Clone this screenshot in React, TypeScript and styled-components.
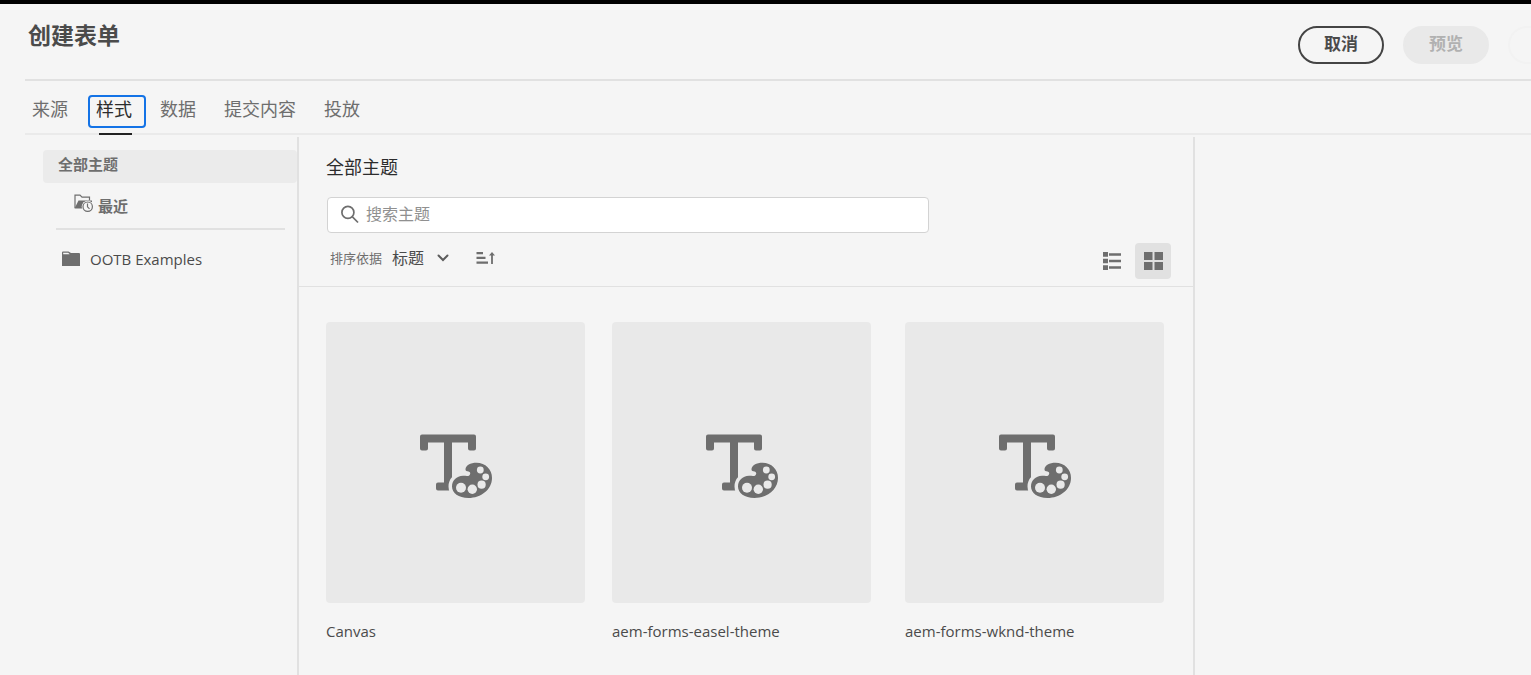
import React, { useState } from 'react';
import styled, { createGlobalStyle } from 'styled-components';

const GlobalStyle = createGlobalStyle`
  *, *::before, *::after { box-sizing: border-box; }
  body {
    margin: 0;
    background: #f5f5f5;
    color: #4b4b4b;
    font-family: 'Open Sans', 'Noto Sans CJK SC', sans-serif;
    font-size: 15px;
    line-height: 20px;
  }
  button, input, select { font-family: inherit; margin: 0; }
`;

const Page = styled.div`
  display: flex;
  flex-direction: column;
  min-height: 100vh;
  border-top: 4px solid #000;
  overflow: hidden;
`;

const Header = styled.header`
  display: flex;
  align-items: flex-start;
  justify-content: space-between;
  height: 77px;
  margin-left: 25px;
  padding: 15px 0 0 3px;
  border-bottom: 2px solid #e1e1e1;
`;

const Title = styled.h1`
  margin: 0;
  font-size: 23px;
  line-height: 32px;
  font-weight: 700;
  color: #4b4b4b;
`;

const Actions = styled.div`
  display: flex;
  gap: 19px;
  margin: 7px -63px 0 0;
`;

const PillButton = styled.button<{ $tone: 'outline' | 'muted' | 'faint' }>`
  width: 86px;
  height: 38px;
  padding: 0 0 2px;
  border-radius: 19px;
  border: 2px solid
    ${({ $tone }) => ($tone === 'outline' ? '#444' : $tone === 'muted' ? '#e9e9e9' : '#f2f2f2')};
  background: ${({ $tone }) => ($tone === 'muted' ? '#e9e9e9' : '#f5f5f5')};
  color: ${({ $tone }) => ($tone === 'outline' ? '#4b4b4b' : '#b1b1b1')};
  font-size: 17px;
  line-height: 24px;
  font-weight: 700;
`;

const Tabs = styled.nav`
  display: flex;
  align-items: flex-start;
  gap: 6px;
  height: 54px;
  margin-left: 25px;
  padding-top: 14px;
  border-bottom: 2px solid #eaeaea;
`;

const Tab = styled.button<{ $active: boolean }>`
  position: relative;
  height: 33px;
  padding: 0 12px 5px 6px;
  border: 2px solid ${({ $active }) => ($active ? '#1473e6' : 'transparent')};
  border-radius: 4px;
  background: transparent;
  color: ${({ $active }) => ($active ? '#2c2c2c' : '#6e6e6e')};
  font-size: 18px;
  line-height: 24px;

  &:first-child { margin-left: -1px; }

  &::after {
    content: '';
    display: ${({ $active }) => ($active ? 'block' : 'none')};
    position: absolute;
    left: 9px;
    bottom: -9px;
    width: 33px;
    height: 2px;
    background: #222;
  }
`;

const Body = styled.div`
  display: flex;
  flex: 1;
  padding-top: 2px;
`;

const Sidebar = styled.aside`
  flex: 0 0 299px;
  padding-top: 13px;
  border-right: 2px solid #e1e1e1;
`;

const AllThemes = styled.a`
  display: block;
  height: 33px;
  margin-left: 43px;
  padding: 4px 15px;
  border-radius: 4px;
  background: #ebebeb;
  color: #6e6e6e;
  font-weight: 700;
  text-decoration: none;
`;

const Recent = styled.a`
  display: flex;
  gap: 5px;
  height: 47px;
  margin: 0 12px 0 56px;
  padding: 11px 0 0 18px;
  border-bottom: 2px solid #e1e1e1;
  color: #6e6e6e;
  font-weight: 700;
  text-decoration: none;

  span { padding-top: 2px; }
`;

const FolderLink = styled.a`
  display: flex;
  align-items: center;
  gap: 10px;
  padding: 19px 0 0 62px;
  color: #4b4b4b;
  text-decoration: none;
`;

const Main = styled.main`
  flex: 1;
  min-width: 0;
  border-right: 2px solid #e1e1e1;
`;

const Toolbar = styled.section`
  height: 150px;
  padding: 18px 22px 0 28px;
  border-bottom: 1px solid #e1e1e1;
`;

const Heading = styled.h2`
  margin: 0 0 0 -1px;
  font-size: 18px;
  line-height: 24px;
  font-weight: 400;
  color: #2c2c2c;
`;

const SearchBox = styled.label`
  display: flex;
  align-items: center;
  gap: 7px;
  max-width: 602px;
  height: 36px;
  margin-top: 18px;
  padding: 0 13px;
  border: 1px solid #d3d3d3;
  border-radius: 4px;
  background: #fff;
`;

const SearchInput = styled.input`
  flex: 1;
  border: 0;
  padding: 0 0 2px;
  outline: 0;
  background: transparent;
  color: #4b4b4b;
  font-size: 16px;
  line-height: 24px;
  &::placeholder { color: #909090; opacity: 1; }
`;

const Controls = styled.div`
  display: flex;
  align-items: center;
  justify-content: space-between;
  padding-top: 10px;
`;

const SortGroup = styled.div`
  display: flex;
  align-items: center;
  height: 30px;
  margin: -6px 0 0 3px;
`;

const SortLabel = styled.label`
  font-size: 13px;
  color: #6e6e6e;
`;

const SortSelect = styled.select`
  appearance: none;
  margin: 0 12px 0 10px;
  padding: 0;
  border: 0;
  background: transparent;
  color: #4b4b4b;
  font-size: 16px;
  line-height: 24px;
`;

const IconButton = styled.button<{ $active?: boolean; $size?: number }>`
  display: grid;
  place-items: center;
  width: ${({ $size = 36 }) => $size}px;
  height: ${({ $size = 36 }) => $size}px;
  padding: 0;
  border: 0;
  border-radius: 4px;
  background: ${({ $active }) => ($active ? '#e1e1e1' : 'transparent')};
`;

const SortDirection = styled(IconButton)`
  margin-left: 22px;
`;

const ViewGroup = styled.div`
  display: flex;
  gap: 5px;
`;

const CardGrid = styled.ul`
  display: grid;
  grid-template-columns: 286px 293px 259px;
  margin: 0;
  padding: 35px 0 32px 27px;
  list-style: none;
`;

const Card = styled.li`
  width: 259px;
`;

const Thumb = styled.div`
  display: grid;
  place-items: center;
  height: 281px;
  padding: 6px 0 0 1px;
  border-radius: 4px;
  background: #e9e9e9;
`;

const CardName = styled.p`
  margin: 18px 0 0;
`;

const Preview = styled.aside`
  flex: 0 0 336px;
`;

const ThemeIcon = () => (
  <svg width="72" height="64" viewBox="0 0 72 64" aria-hidden="true">
    <path
      fill="#6e6e6e"
      d="M2 .5h52a2 2 0 0 1 2 2v12a2 2 0 0 1-2 2h-4a2 2 0 0 1-2-2v-6H32v48H18a2 2 0 0 1-2-2v-4a2 2 0 0 1 2-2h6v-40H8v6a2 2 0 0 1-2 2H2a2 2 0 0 1-2-2v-12a2 2 0 0 1 2-2Z"
    />
    <path
      fill="#6e6e6e"
      stroke="#e9e9e9"
      strokeWidth="7"
      paintOrder="stroke"
      d="M45.500 35.500C45.500 31.500 50.500 28.800 56.500 28.800C65.500 28.800 72 35.500 72 44C72 55.500 61 64 48.500 64C38.500 64 32 59 32 52.500C32 46.500 36.500 42 43 41.800C45.500 41.700 48 42.600 49.500 41.200C51 39.500 50 37.800 48.500 37.500C47 37.100 45.500 37.200 45.500 35.500Z"
    />
    <g fill="#e9e9e9">
      <circle cx="60.300" cy="36" r="3.400" />
      <circle cx="65.700" cy="42.800" r="3.400" />
      <circle cx="61.600" cy="50.700" r="4.100" />
      <circle cx="52.300" cy="55.300" r="4.700" />
      <circle cx="41" cy="53.700" r="5" />
    </g>
  </svg>
);

const RecentIcon = () => (
  <svg width="19" height="19" viewBox="0 0 19 19" aria-hidden="true">
    <path fill="none" stroke="#6e6e6e" strokeWidth="1.200" d="M1 14V1.200h5l2 2h7.500v3" />
    <path fill="#6e6e6e" d="M.5 14.500 4.500 6.500H18v2h-9v6Z" />
    <circle cx="13.700" cy="12.700" r="6" fill="#f5f5f5" />
    <circle cx="13.700" cy="12.700" r="4.700" fill="none" stroke="#6e6e6e" strokeWidth="1.200" />
    <path fill="none" stroke="#6e6e6e" strokeWidth="1.200" d="M13.500 9.500v3.300l2 2" />
  </svg>
);

const FolderIcon = () => (
  <svg width="18" height="16" viewBox="0 0 18 16" aria-hidden="true">
    <path fill="#6e6e6e" d="M0 1.500Q0 .5 1 .5h5.500L9 2h8q1 0 1 1v12H0Z" />
    <path fill="#f5f5f5" d="M1.200 1.700h5L7.700 3.300H1.200Z" />
  </svg>
);

const SearchIcon = () => (
  <svg width="18" height="20" viewBox="0 0 18 20" fill="none" stroke="#6e6e6e" strokeWidth="1.700" aria-hidden="true">
    <circle cx="6.900" cy="7.400" r="6" />
    <path d="m11.200 11.700 5.800 5.800" />
  </svg>
);

const ChevronIcon = () => (
  <svg width="12" height="8" viewBox="0 0 12 8" fill="none" stroke="#5c5c5c" strokeWidth="2" strokeLinecap="round" aria-hidden="true">
    <path d="m1.500 1.500 4.500 4.500 4.500-4.500" />
  </svg>
);

const SortIcon = () => (
  <svg width="19" height="12" viewBox="0 0 19 12" aria-hidden="true">
    <path fill="#6e6e6e" d="M.5 0h6.500v2.300H.5zM.5 4.700h9v2.300H.5zM.5 9.500h11.500v2.300H.5zM15.100 2h1.800v10h-1.800zM16 0l3 3.500h-6z" />
  </svg>
);

const ListIcon = () => (
  <svg width="18" height="18" viewBox="0 0 18 18" aria-hidden="true">
    <path fill="#6e6e6e" d="M0 0h5v4.700H0zM6 1.200h12v2.500H6zM0 6.700h5v4.600H0zM6 7.800h12v2.400H6zM0 13.300h5V18H0zM6 14.300h12v2.500H6z" />
  </svg>
);

const GridIcon = () => (
  <svg width="19" height="18" viewBox="0 0 19 18" aria-hidden="true">
    <path fill="#6e6e6e" d="M0 0h8.500v8H0zM10.500 0H19v8h-8.500zM0 10h8.500v8H0zM10.500 10H19v8h-8.500z" />
  </svg>
);

const tabs = ['来源', '样式', '数据', '提交内容', '投放'];
const themes = ['Canvas', 'aem-forms-easel-theme', 'aem-forms-wknd-theme'];

export default function App() {
  const [tab, setTab] = useState('样式');
  const [query, setQuery] = useState('');

  return (
    <>
      <GlobalStyle />
      <Page>
        <Header>
          <Title>创建表单</Title>
          <Actions>
            <PillButton type="button" $tone="outline">取消</PillButton>
            <PillButton type="button" $tone="muted" disabled>预览</PillButton>
            <PillButton type="button" $tone="faint" disabled aria-label="创建" />
          </Actions>
        </Header>
        <Tabs>
          {tabs.map((name) => (
            <Tab key={name} type="button" $active={name === tab} onClick={() => setTab(name)}>
              {name}
            </Tab>
          ))}
        </Tabs>
        <Body>
          <Sidebar>
            <AllThemes href="#all">全部主题</AllThemes>
            <Recent href="#recent">
              <RecentIcon />
              <span>最近</span>
            </Recent>
            <FolderLink href="#ootb">
              <FolderIcon />
              OOTB Examples
            </FolderLink>
          </Sidebar>
          <Main>
            <Toolbar>
              <Heading>全部主题</Heading>
              <SearchBox>
                <SearchIcon />
                <SearchInput
                  type="text"
                  aria-label="搜索主题"
                  placeholder="搜索主题"
                  value={query}
                  onChange={(e) => setQuery(e.target.value)}
                />
              </SearchBox>
              <Controls>
                <SortGroup>
                  <SortLabel htmlFor="sort">排序依据</SortLabel>
                  <SortSelect id="sort">
                    <option>标题</option>
                  </SortSelect>
                  <ChevronIcon />
                  <SortDirection type="button" $size={28} aria-label="升序">
                    <SortIcon />
                  </SortDirection>
                </SortGroup>
                <ViewGroup>
                  <IconButton type="button" aria-label="列表视图">
                    <ListIcon />
                  </IconButton>
                  <IconButton type="button" $active aria-label="卡片视图">
                    <GridIcon />
                  </IconButton>
                </ViewGroup>
              </Controls>
            </Toolbar>
            <CardGrid>
              {themes.filter((name) => name.includes(query)).map((name) => (
                <Card key={name}>
                  <Thumb>
                    <ThemeIcon />
                  </Thumb>
                  <CardName>{name}</CardName>
                </Card>
              ))}
            </CardGrid>
          </Main>
          <Preview />
        </Body>
      </Page>
    </>
  );
}
